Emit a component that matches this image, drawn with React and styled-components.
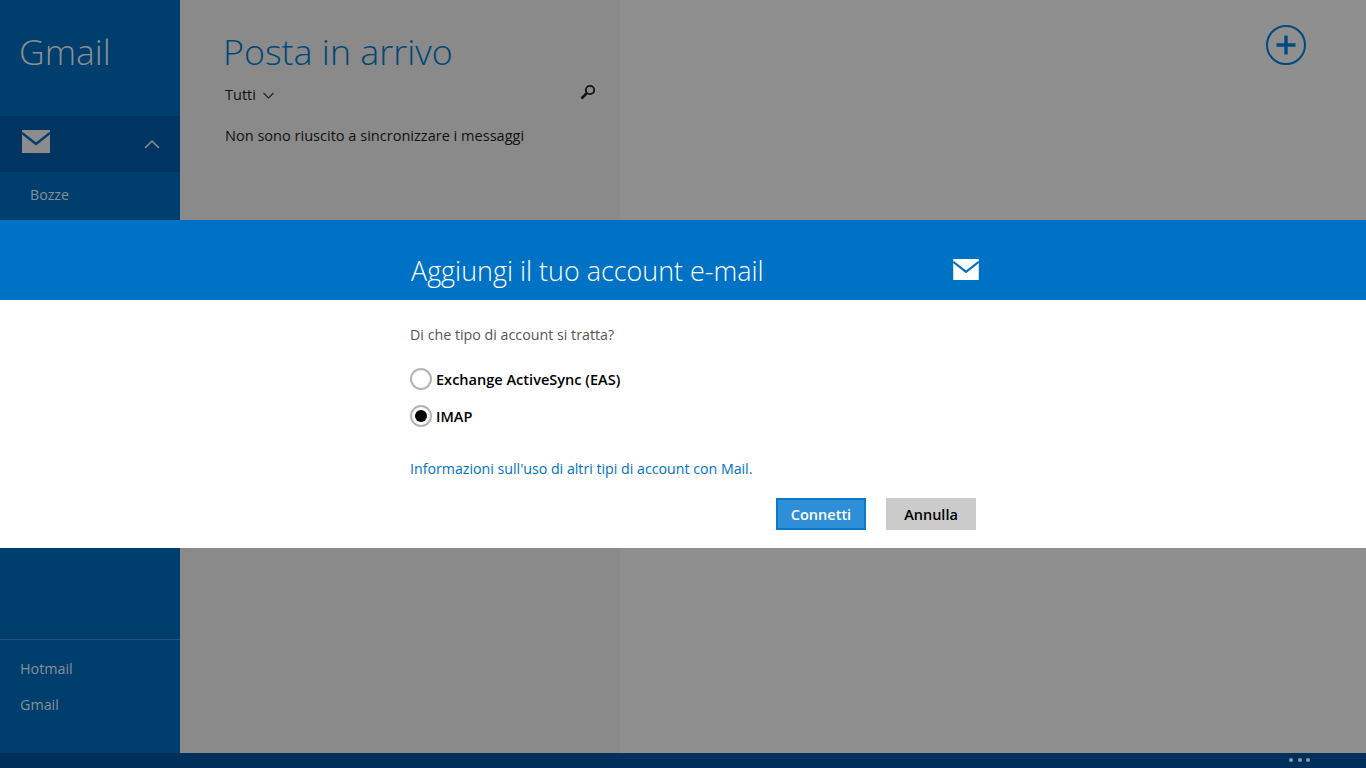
import React from 'react';
import styled, { createGlobalStyle } from 'styled-components';

const Global = createGlobalStyle`
  html, body { margin: 0; padding: 0; height: 100%; overflow: hidden; }
  body { font-family: 'Open Sans', 'Noto Sans', sans-serif; }
  * { box-sizing: border-box; }
`;

const Screen = styled.div`
  position: relative;
  width: 1366px;
  height: 768px;
  display: flex;
  flex-direction: column;
  background: #8f8f8f;
  overflow: hidden;
`;
const Panes = styled.div`
  flex: 1;
  display: flex;
  min-height: 0;
`;
const Sidebar = styled.div`
  width: 180px;
  display: flex;
  flex-direction: column;
  background: #003e6e;
`;
const AppName = styled.div`
  height: 116px;
  padding: 29px 0 0 19px;
  font-size: 35.5px;
  line-height: 44px;
  font-weight: 300;
  color: #8a8f94;
`;
const FolderHead = styled.div`
  height: 56px;
  padding: 0 20px 0 22px;
  display: flex;
  align-items: center;
  justify-content: space-between;
  background: #003562;
`;
const FolderMail = styled.span`
  display: flex;
  margin-top: -6px;
`;
const FolderItem = styled.div`
  padding: 13px 0 0 30px;
  font-size: 14.2px;
  line-height: 20px;
  color: #8a8f94;
`;
const Accounts = styled.div`
  margin-top: auto;
  height: 114px;
  padding: 19px 0 0 20px;
  display: flex;
  flex-direction: column;
  gap: 16px;
  border-top: 1px solid #1f5480;
`;
const AccountItem = styled.div`
  font-size: 14.3px;
  line-height: 20px;
  color: #8a8f94;
`;
const ListPane = styled.div`
  width: 440px;
  padding: 27px 24px 0 45px;
  background: #8a8a8a;
`;
const PaneTitle = styled.div`
  margin-left: -2px;
  font-size: 35.8px;
  line-height: 48px;
  font-weight: 300;
  color: #004677;
`;
const FilterRow = styled.div`
  margin-top: 10px;
  display: flex;
  align-items: center;
  justify-content: space-between;
  height: 20px;
`;
const Filter = styled.div`
  display: flex;
  align-items: center;
  gap: 7px;
  font-size: 14.5px;
  line-height: 20px;
  color: #111;
`;
const SearchIcon = styled.svg`
  margin-top: -7px;
`;
const Message = styled.div`
  margin-top: 20px;
  font-size: 14.55px;
  line-height: 20px;
  color: #111;
`;
const ReadingPane = styled.div`
  flex: 1;
  padding: 25px 60px 0 0;
  display: flex;
  justify-content: flex-end;
  align-items: flex-start;
`;
const AppBar = styled.div`
  height: 15px;
  padding: 5px 56px 0 0;
  display: flex;
  justify-content: flex-end;
  gap: 4.5px;
  background: #002f5c;
`;
const Dot = styled.span`
  width: 4px;
  height: 4px;
  border-radius: 50%;
  background: #8f98a3;
`;

const Dialog = styled.div`
  position: absolute;
  left: 0;
  right: 0;
  top: 220px;
  height: 328px;
  display: flex;
  flex-direction: column;
  background: #fff;
`;
const DialogHead = styled.div`
  height: 80px;
  padding: 39px 0 0 411px;
  background: #0072c6;
`;
const DialogHeadInner = styled.div`
  width: 568px;
  display: flex;
  justify-content: space-between;
  align-items: flex-start;
`;
const DialogTitle = styled.div`
  margin-top: -6px;
  font-size: 26.9px;
  line-height: 36px;
  font-weight: 300;
  color: #fff;
`;
const DialogBody = styled.div`
  width: 566px;
  margin-left: 410px;
  padding-top: 25px;
  display: flex;
  flex-direction: column;
`;
const Question = styled.div`
  font-size: 14.25px;
  line-height: 20px;
  color: #555;
`;
const Options = styled.div`
  margin-top: 23px;
  display: flex;
  flex-direction: column;
  gap: 15px;
`;
const Option = styled.label`
  display: flex;
  align-items: center;
  gap: 4px;
  height: 22px;
  font-size: 14.55px;
  font-weight: 600;
  color: #000;
`;
const Radio = styled.span`
  width: 22px;
  height: 22px;
  margin-top: -1px;
  border-radius: 50%;
  border: 2px solid #b3b3b3;
  display: flex;
  align-items: center;
  justify-content: center;
  &::after {
    content: '';
    width: 12px;
    height: 12px;
    border-radius: 50%;
    background: ${(props) => (props.$checked ? '#000' : 'transparent')};
  }
`;
const InfoLink = styled.a`
  margin-top: 32px;
  font-size: 14.2px;
  line-height: 20px;
  color: #0072c6;
`;
const Buttons = styled.div`
  margin-top: 19px;
  display: flex;
  justify-content: flex-end;
  gap: 20px;
`;
const Button = styled.button`
  width: 90px;
  height: 32px;
  padding: 0;
  font-family: inherit;
  font-size: 14.5px;
  font-weight: 600;
  border: 2px solid ${(props) => (props.$primary ? '#0b78c9' : '#cbcbcb')};
  background: ${(props) => (props.$primary ? '#2f8ed8' : '#cbcbcb')};
  color: ${(props) => (props.$primary ? '#fff' : '#000')};
`;

const MailIcon = ({ width, height, fill, stroke }) => (
  <svg width={width} height={height} viewBox="0 0 28 23">
    <rect width="28" height="23" fill={fill} />
    <path d="M0 3 L14 14 L28 3" fill="none" stroke={stroke} strokeWidth="2.4" />
  </svg>
);

const App = () => (
  <Screen>
    <Global />
    <Panes>
      <Sidebar>
        <AppName>Gmail</AppName>
        <FolderHead>
          <FolderMail>
            <MailIcon width={28} height={23} fill="#8c8c8c" stroke="#003e6e" />
          </FolderMail>
          <svg width="16" height="10" viewBox="0 0 16 10">
            <path d="M1 9 L8 2 L15 9" fill="none" stroke="#8a8f94" strokeWidth="1.5" />
          </svg>
        </FolderHead>
        <FolderItem>Bozze</FolderItem>
        <Accounts>
          <AccountItem>Hotmail</AccountItem>
          <AccountItem>Gmail</AccountItem>
        </Accounts>
      </Sidebar>
      <ListPane>
        <PaneTitle>Posta in arrivo</PaneTitle>
        <FilterRow>
          <Filter>
            Tutti
            <svg width="11" height="7" viewBox="0 0 11 7">
              <path d="M0.5 1 L5.5 6 L10.5 1" fill="none" stroke="#222" strokeWidth="1.1" />
            </svg>
          </Filter>
          <SearchIcon width="16" height="16" viewBox="0 0 16 16">
            <circle cx="10" cy="6" r="4.2" fill="none" stroke="#111" strokeWidth="1.8" />
            <path d="M6.8 9.2 L1.5 14.5" stroke="#111" strokeWidth="2.6" />
          </SearchIcon>
        </FilterRow>
        <Message>Non sono riuscito a sincronizzare i messaggi</Message>
      </ListPane>
      <ReadingPane>
        <svg width="40" height="40" viewBox="0 0 40 40">
          <circle cx="20" cy="20" r="19" fill="none" stroke="#004a7f" strokeWidth="2" />
          <path d="M10.5 20 H29.5 M20 10.5 V29.5" stroke="#004a7f" strokeWidth="3.4" />
        </svg>
      </ReadingPane>
    </Panes>
    <AppBar>
      <Dot />
      <Dot />
      <Dot />
    </AppBar>
    <Dialog>
      <DialogHead>
        <DialogHeadInner>
          <DialogTitle>Aggiungi il tuo account e-mail</DialogTitle>
          <MailIcon width={26} height={21} fill="#fff" stroke="#0072c6" />
        </DialogHeadInner>
      </DialogHead>
      <DialogBody>
        <Question>Di che tipo di account si tratta?</Question>
        <Options>
          <Option>
            <Radio />
            Exchange ActiveSync (EAS)
          </Option>
          <Option>
            <Radio $checked />
            IMAP
          </Option>
        </Options>
        <InfoLink>Informazioni sull'uso di altri tipi di account con Mail.</InfoLink>
        <Buttons>
          <Button $primary>Connetti</Button>
          <Button>Annulla</Button>
        </Buttons>
      </DialogBody>
    </Dialog>
  </Screen>
);

export default App;
